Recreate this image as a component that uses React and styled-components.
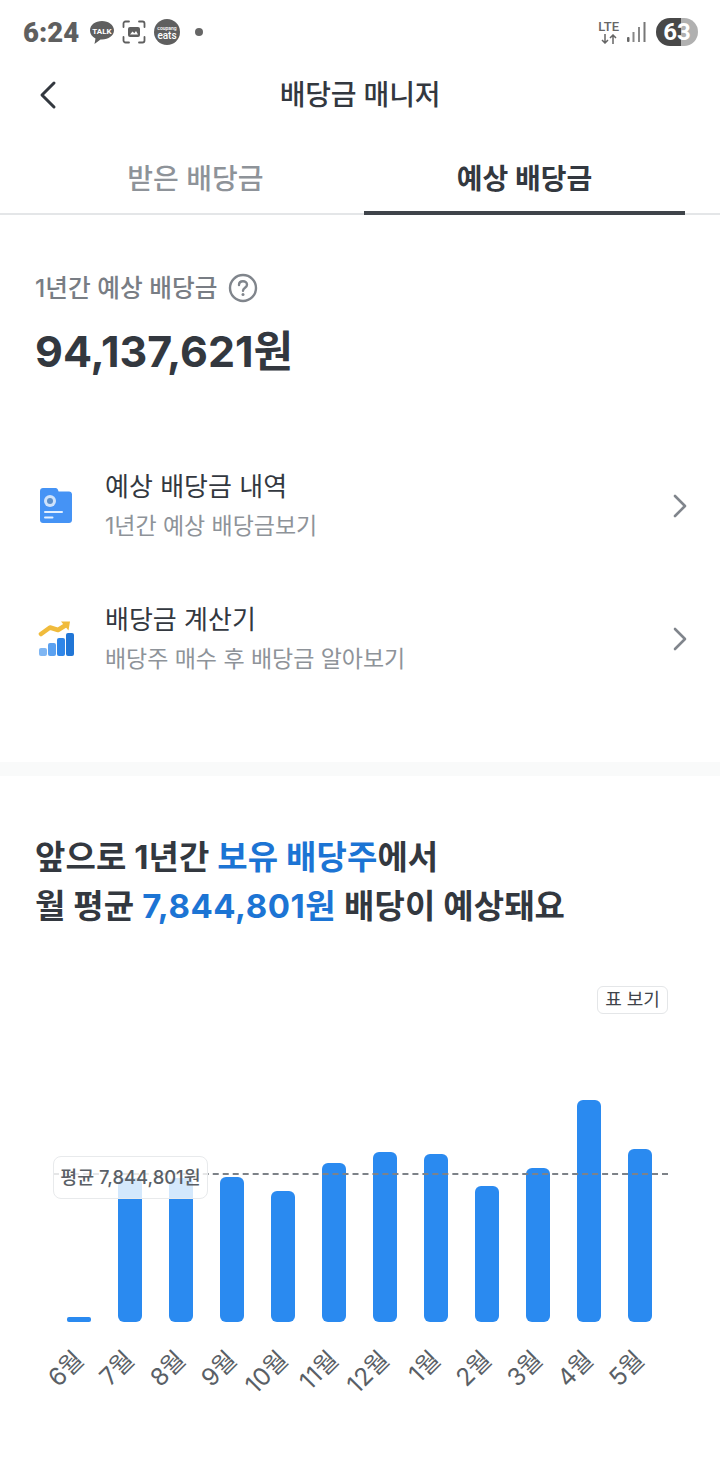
import React from "react";
import styled, { createGlobalStyle } from "styled-components";

const bars = [
  { month: "6월", height: 5 },
  { month: "7월", height: 144 },
  { month: "8월", height: 144 },
  { month: "9월", height: 145 },
  { month: "10월", height: 131 },
  { month: "11월", height: 159 },
  { month: "12월", height: 170 },
  { month: "1월", height: 168 },
  { month: "2월", height: 136 },
  { month: "3월", height: 154 },
  { month: "4월", height: 222 },
  { month: "5월", height: 173 },
];

const App = () => {
  return (
    <Page>
      <GlobalStyle />
      <StatusBar>
        <StatusLeft>
          <Clock>6:24</Clock>
          <TalkIcon />
          <CaptureIcon />
          <EatsBadge>
            <small>coupang</small>
            eats
          </EatsBadge>
          <Dot />
        </StatusLeft>
        <StatusRight>
          <Lte>
            LTE
            <svg width="16" height="10" viewBox="0 0 16 10" fill="none">
              <path d="M4 0v9M1 6l3 3 3-3M12 10V1M9 4l3-3 3 3" stroke="#666" strokeWidth="1.500" />
            </svg>
          </Lte>
          <SignalIcon />
          <Battery>63</Battery>
        </StatusRight>
      </StatusBar>

      <Header>
        <BackButton>
          <svg width="20" height="30" viewBox="0 0 20 30" fill="none">
            <path d="M16 3 L4 15 L16 27" stroke="#33383f" strokeWidth="3" strokeLinecap="round" strokeLinejoin="round" />
          </svg>
        </BackButton>
        <HeaderTitle>배당금 매니저</HeaderTitle>
      </Header>

      <Tabs>
        <Tab>받은 배당금</Tab>
        <Tab $active>예상 배당금</Tab>
      </Tabs>

      <Summary>
        <SummaryLabel>
          1년간 예상 배당금
          <HelpIcon />
        </SummaryLabel>
        <SummaryAmount>94,137,621원</SummaryAmount>
      </Summary>

      <Menu>
        <MenuRow>
          <DocIcon />
          <MenuText>
            <MenuTitle>예상 배당금 내역</MenuTitle>
            <MenuSub>1년간 예상 배당금보기</MenuSub>
          </MenuText>
          <Chevron />
        </MenuRow>
        <MenuRow>
          <GrowthIcon />
          <MenuText>
            <MenuTitle>배당금 계산기</MenuTitle>
            <MenuSub>배당주 매수 후 배당금 알아보기</MenuSub>
          </MenuText>
          <Chevron />
        </MenuRow>
      </Menu>

      <Divider />

      <ChartSection>
        <Headline>
          앞으로 1년간 <Blue>보유 배당주</Blue>에서
          <br />
          월 평균 <Blue $figure>7,844,801원</Blue> 배당이 예상돼요
        </Headline>
        <TableRow>
          <TableButton>표 보기</TableButton>
        </TableRow>
        <Chart>
          <AverageLine />
          <AverageTag>평균 7,844,801원</AverageTag>
          {bars.map((bar) => (
            <Column key={bar.month}>
              <BarSlot>
                <Bar style={{ height: bar.height }} $thin={bar.height < 10} />
              </BarSlot>
              <MonthLabel>{bar.month}</MonthLabel>
            </Column>
          ))}
        </Chart>
      </ChartSection>
    </Page>
  );
};

const TalkIcon = () => (
  <svg width="24" height="25" viewBox="0 0 24 25">
    <path d="M12 1C5.500 1 0 4.800 0 10.500c0 3.500 2.200 6.500 5.500 8L4.500 24l6-4.600c.5.100 1 .1 1.500.1 6.500 0 12-4 12-9.200S18.500 1 12 1z" fill="#5f5f5f" />
    <text x="12" y="13.500" textAnchor="middle" fontSize="8" fontWeight="700" fill="#fff" fontFamily="Roboto, sans-serif">TALK</text>
  </svg>
);

const CaptureIcon = () => (
  <svg width="24" height="24" viewBox="0 0 24 24" fill="none">
    <path d="M1.500 7V3.500a2 2 0 0 1 2-2H7M17 1.500h3.500a2 2 0 0 1 2 2V7M22.500 17v3.500a2 2 0 0 1-2 2H17M7 22.500H3.500a2 2 0 0 1-2-2V17" stroke="#5f5f5f" strokeWidth="1.800" strokeLinecap="round" />
    <rect x="6" y="7" width="12" height="10" rx="2" fill="#5f5f5f" />
    <path d="M8 14.500l2.500-3 1.800 1.800 1.700-2.300 2 3.500z" fill="#fff" />
  </svg>
);

const SignalIcon = () => (
  <svg width="19" height="20" viewBox="0 0 19 20">
    <rect x="0" y="15" width="2.500" height="5" rx="1" fill="#666" />
    <rect x="5.500" y="10" width="2" height="10" fill="#888" />
    <rect x="11" y="5" width="2" height="15" fill="#888" />
    <rect x="16.500" y="0" width="2" height="20" fill="#777" />
  </svg>
);

const HelpIcon = () => (
  <svg width="30" height="30" viewBox="0 0 30 30" fill="none">
    <circle cx="15" cy="15" r="13" stroke="#80858c" strokeWidth="2.400" />
    <path d="M11 12c0-2.400 1.800-3.800 4-3.800s4 1.400 4 3.500c0 3-4 3-4 6" stroke="#80858c" strokeWidth="2.400" strokeLinecap="round" />
    <circle cx="15" cy="21.500" r="1.500" fill="#80858c" />
  </svg>
);

const DocIcon = () => (
  <MenuIcon>
    <svg width="32" height="35" viewBox="0 0 32 35">
      <path d="M3 0h12c1.500 0 2.500.6 3 2l.6 1.500H29c1.700 0 3 1.300 3 3V32c0 1.700-1.300 3-3 3H3c-1.700 0-3-1.300-3-3V3c0-1.700 1.300-3 3-3z" fill="#4593f5" />
      <circle cx="10" cy="13" r="6" fill="#cfe3fb" />
      <circle cx="10" cy="13" r="3" fill="#5c8fc9" />
      <rect x="4" y="23" width="19" height="2" rx="1" fill="#e4f0ff" />
      <rect x="4" y="28.500" width="9.500" height="2" rx="1" fill="#e4f0ff" />
    </svg>
  </MenuIcon>
);

const GrowthIcon = () => (
  <MenuIcon $shift>
    <svg width="38" height="36" viewBox="0 0 38 36">
      <path d="M3 13 L12 6.500 L20 9 L28 4" fill="none" stroke="#f0bb3c" strokeWidth="4.600" strokeLinecap="round" strokeLinejoin="round" />
      <path d="M23 0.500h9l-1.500 9z" fill="#f0bb3c" />
      <rect x="1" y="27" width="8" height="8" rx="2" fill="#7fb6f3" />
      <rect x="10" y="22" width="8" height="13" rx="2" fill="#5ba1f0" />
      <rect x="19" y="17" width="8" height="18" rx="2" fill="#2f86e8" />
      <rect x="28" y="12" width="8" height="23" rx="2" fill="#2176d6" />
    </svg>
  </MenuIcon>
);

const Chevron = () => (
  <svg width="16" height="24" viewBox="0 0 16 24" fill="none">
    <path d="M3 2 L13 12 L3 22" stroke="#80858c" strokeWidth="2.600" strokeLinecap="round" strokeLinejoin="round" />
  </svg>
);

export default App;

const GlobalStyle = createGlobalStyle`
  html, body {
    margin: 0;
    padding: 0;
    background: #fff;
  }
  * {
    box-sizing: border-box;
  }
`;

const Page = styled.div`
  width: 720px;
  height: 1459px;
  overflow: hidden;
  background: #fff;
  font-family: Inter, "Noto Sans CJK KR", sans-serif;
  color: #33383f;
`;

const StatusBar = styled.div`
  height: 62px;
  padding: 2px 22px 0 23px;
  display: flex;
  align-items: center;
  justify-content: space-between;
`;

const StatusLeft = styled.div`
  display: flex;
  align-items: center;
  gap: 8px;
`;

const Clock = styled.span`
  width: 55px;
  font: 900 27.500px Roboto, sans-serif;
  color: #5f5f5f;
  margin-right: 4px;
`;

const EatsBadge = styled.div`
  width: 26px;
  height: 26px;
  border-radius: 50%;
  background: #5f5f5f;
  color: #fff;
  font: 500 10px/9px Roboto, sans-serif;
  display: flex;
  flex-direction: column;
  align-items: center;
  justify-content: center;

  small {
    font-size: 5px;
    line-height: 6px;
  }
`;

const Dot = styled.span`
  width: 8px;
  height: 8px;
  border-radius: 50%;
  background: #666;
  margin-left: 7px;
`;

const StatusRight = styled.div`
  display: flex;
  align-items: center;
  gap: 8px;
`;

const Lte = styled.div`
  display: flex;
  flex-direction: column;
  align-items: center;
  gap: 1px;
  font: 500 13px/13px Roboto, sans-serif;
  color: #666;
`;

const Battery = styled.div`
  width: 42px;
  height: 28px;
  border-radius: 14px;
  margin-left: 2px;
  background: linear-gradient(to right, #484848 0 60%, #b0b0b0 60% 100%);
  color: #fff;
  font: 700 24px/28px Roboto, sans-serif;
  text-align: center;
`;

const Header = styled.div`
  height: 66px;
  padding-bottom: 4px;
  position: relative;
  display: flex;
  align-items: center;
  justify-content: center;
`;

const BackButton = styled.div`
  position: absolute;
  left: 38px;
  top: 18px;
  height: 30px;
`;

const HeaderTitle = styled.div`
  font-size: 28px;
  font-weight: 500;
  letter-spacing: -0.2px;
  color: #33383f;
`;

const Tabs = styled.div`
  height: 87px;
  padding: 0 35px;
  display: grid;
  grid-template-columns: 1fr 1fr;
  column-gap: 8px;
  border-bottom: 2px solid #e4e6e8;
`;

const Tab = styled.div`
  margin-bottom: -2px;
  display: flex;
  align-items: center;
  justify-content: center;
  padding-top: 14px;
  font-size: 28px;
  font-weight: ${(p) => (p.$active ? 700 : 500)};
  color: ${(p) => (p.$active ? "#33383f" : "#8e9399")};
  border-bottom: 4px solid ${(p) => (p.$active ? "#3f444a" : "transparent")};
`;

const Summary = styled.div`
  padding: 55px 35px 0;
  height: 224px;
`;

const SummaryLabel = styled.div`
  display: flex;
  align-items: center;
  gap: 11px;
  font-size: 24.700px;
  font-weight: 500;
  line-height: 36px;
  color: #787d84;
`;

const SummaryAmount = styled.div`
  margin-top: 17px;
  font-size: 43px;
  font-weight: 700;
  line-height: 56px;
  color: #33383f;
`;

const Menu = styled.div`
  display: flex;
  flex-direction: column;
`;

const MenuRow = styled.div`
  height: 133px;
  padding: 0 32px 0 40px;
  display: flex;
  align-items: center;
`;

const MenuIcon = styled.div`
  margin-left: ${(p) => (p.$shift ? "-2px" : "0")};
  flex: 0 0 ${(p) => (p.$shift ? "67px" : "65px")};
  display: flex;
  align-items: center;
`;

const MenuText = styled.div`
  flex: 1;
`;

const MenuTitle = styled.div`
  font-size: 26px;
  line-height: 38px;
  color: #33383f;
`;

const MenuSub = styled.div`
  margin-top: 3px;
  font-size: 23px;
  letter-spacing: -0.05px;
  line-height: 34px;
  color: #8e9399;
`;

const Divider = styled.div`
  margin-top: 57px;
  height: 14px;
  background: #f9fafa;
`;

const ChartSection = styled.div`
  padding: 57px 35px 0;
`;

const Headline = styled.div`
  font-size: 33px;
  font-weight: 700;
  letter-spacing: 0.08px;
  line-height: 49px;
  color: #33383f;
`;

const Blue = styled.span`
  color: #1c74d4;
  letter-spacing: ${(p) => (p.$figure ? "0.55px" : "inherit")};
`;

const TableRow = styled.div`
  margin-top: 55px;
  padding-right: 17px;
  display: flex;
  justify-content: flex-end;
`;

const TableButton = styled.div`
  width: 71px;
  height: 28px;
  border: 1px solid #e4e6e8;
  border-radius: 6px;
  font-size: 18px;
  line-height: 26px;
  text-align: center;
  color: #3f444a;
`;

const Chart = styled.div`
  position: relative;
  width: 612px;
  margin-left: 18px;
  display: grid;
  grid-template-columns: repeat(12, 51px);
`;

const Column = styled.div`
  display: flex;
  flex-direction: column;
  align-items: center;
`;

const BarSlot = styled.div`
  height: 308px;
  display: flex;
  align-items: flex-end;
`;

const Bar = styled.div`
  width: 24px;
  background: #2a8af0;
  border-radius: ${(p) => (p.$thin ? "2px" : "6px")};
`;

const MonthLabel = styled.div`
  align-self: flex-end;
  margin: 18px 25.5px 0 0;
  height: 30px;
  font-size: 24.500px;
  line-height: 30px;
  white-space: nowrap;
  color: #5a5f66;
  transform-origin: right center;
  transform: rotate(-45deg);
`;

const AverageLine = styled.div`
  position: absolute;
  left: 0;
  right: -3px;
  top: 159px;
  border-top: 2px dashed #7d8288;
`;

const AverageTag = styled.div`
  position: absolute;
  left: 0;
  top: 142px;
  height: 43px;
  width: 155px;
  border: 1px solid #e8eaec;
  border-radius: 8px;
  background: rgba(255, 255, 255, 0.8);
  font-size: 18.400px;
  font-weight: 500;
  line-height: 41px;
  text-align: center;
  color: #5a5f66;
  z-index: 1;
`;
